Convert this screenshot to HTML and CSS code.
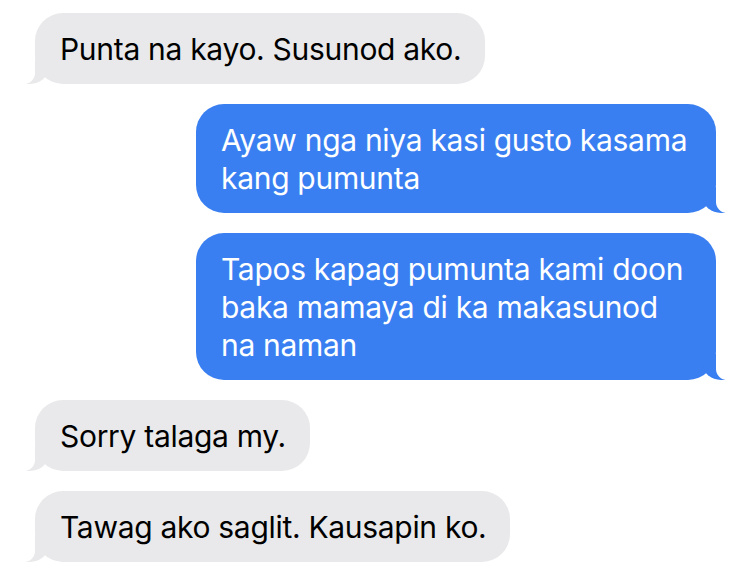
FILE: index.html
```html
<!DOCTYPE html>
<html lang="en">
<head>
    <meta charset="UTF-8">
    <meta name="viewport" content="width=device-width, initial-scale=1.0">
    <title>Messages</title>

    <link rel="stylesheet" href="styles.css">
</head>
<body>
<div class="thread">
    <div class="bubble them">Punta na kayo. Susunod ako.</div>
    <div class="bubble me">Ayaw nga niya kasi gusto kasama kang pumunta</div>
    <div class="bubble me">Tapos kapag pumunta kami doon baka mamaya di ka makasunod na naman</div>
    <div class="bubble them">Sorry talaga my.</div>
    <div class="bubble them">Tawag ako saglit. Kausapin ko.</div>
</div>
</body>
</html>
```

FILE: styles.css
```css
* {
    box-sizing: border-box;
    margin: 0;
    padding: 0;
}
body {
    font-family: Inter, "Liberation Sans", Arial, sans-serif;
    background-color: #fff;
    color: #000;
}
.thread {
    display: flex;
    flex-direction: column;
    gap: 20px;
    padding: 13px 34px 0 35px;
}
.bubble {
    position: relative;
    max-width: 520px;
    padding: 17px 24px 16px 25px;
    font-size: 30px;
    line-height: 38px;
    letter-spacing: -0.3px;
    border-radius: 28px;
}
.them {
    align-self: flex-start;
    background-color: #e9e9eb;
    color: #000;
}
.me {
    align-self: flex-end;
    background-color: #3a7ff1;
    color: #fff;
}

/* tails */
.bubble::before,
.bubble::after {
    content: "";
    position: absolute;
    bottom: 0;
    height: 26px;
}
.them::before {
    left: -9px;
    width: 22px;
    background-color: #e9e9eb;
    border-bottom-right-radius: 18px 15px;
}
.them::after {
    left: -28px;
    width: 28px;
    background-color: #fff;
    border-bottom-right-radius: 11px;
}
.me::before {
    right: -9px;
    width: 22px;
    background-color: #3a7ff1;
    border-bottom-left-radius: 18px 15px;
}
.me::after {
    right: -28px;
    width: 28px;
    background-color: #fff;
    border-bottom-left-radius: 11px;
}
```
